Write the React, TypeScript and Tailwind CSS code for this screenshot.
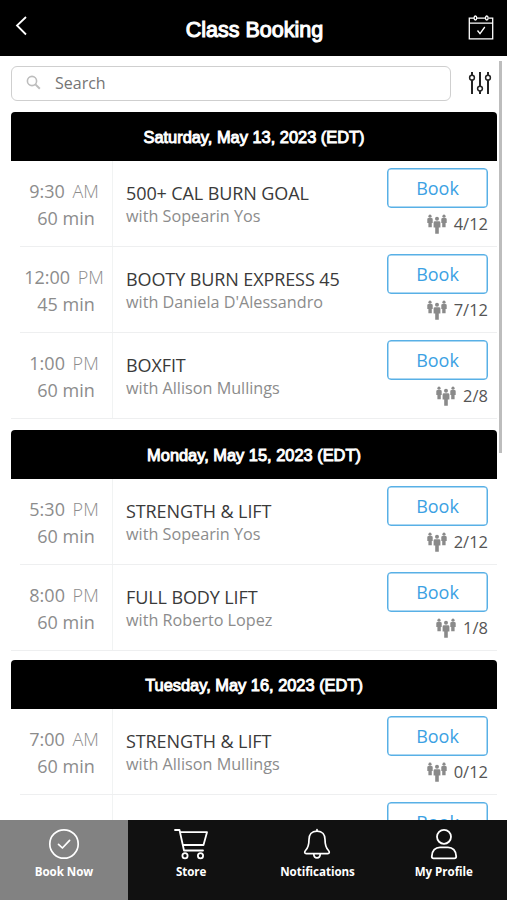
import React from "react";

interface ClassItem {
  time: string;
  period: string;
  duration: string;
  title: string;
  trainer: string;
  spots: string;
}

interface DaySchedule {
  date: string;
  spacing: string;
  classes: ClassItem[];
}

const schedule: DaySchedule[] = [
  {
    date: "Saturday, May 13, 2023 (EDT)",
    spacing: "mb-[11px]",
    classes: [
      { time: "9:30", period: "AM", duration: "60 min", title: "500+ CAL BURN GOAL", trainer: "Sopearin Yos", spots: "4/12" },
      { time: "12:00", period: "PM", duration: "45 min", title: "BOOTY BURN EXPRESS 45", trainer: "Daniela D'Alessandro", spots: "7/12" },
      { time: "1:00", period: "PM", duration: "60 min", title: "BOXFIT", trainer: "Allison Mullings", spots: "2/8" },
    ],
  },
  {
    date: "Monday, May 15, 2023 (EDT)",
    spacing: "mb-[9px]",
    classes: [
      { time: "5:30", period: "PM", duration: "60 min", title: "STRENGTH & LIFT", trainer: "Sopearin Yos", spots: "2/12" },
      { time: "8:00", period: "PM", duration: "60 min", title: "FULL BODY LIFT", trainer: "Roberto Lopez", spots: "1/8" },
    ],
  },
  {
    date: "Tuesday, May 16, 2023 (EDT)",
    spacing: "mb-[10px]",
    classes: [
      { time: "7:00", period: "AM", duration: "60 min", title: "STRENGTH & LIFT", trainer: "Allison Mullings", spots: "0/12" },
      { time: "", period: "", duration: "", title: "", trainer: "", spots: "" },
    ],
  },
];

export default function App() {
  return (
    <div className="relative flex h-[900px] w-[507px] flex-col overflow-hidden bg-white font-['Open_Sans',sans-serif]">
      {/* HEADER */}
      <header className="flex h-14 shrink-0 items-center justify-between bg-black pl-[15px] pr-[13px] text-white">
        <button className="mb-[4px] w-[26px]">
          <BackIcon />
        </button>
        <h1 className="mt-[3px] font-['Liberation_Sans',sans-serif] text-[21.5px] leading-6 [-webkit-text-stroke:1.1px_white]">
          Class Booking
        </h1>
        <button>
          <CalendarIcon />
        </button>
      </header>

      <main className="min-h-0 flex-1 overflow-hidden pl-[11px] pr-[10px] pt-[10px]">
        {/* SEARCH */}
        <div className="flex items-center justify-between pr-[5px]">
          <div className="flex h-[35px] w-[440px] items-center rounded-md border border-[#cfcfcf] pb-[2px] pl-[14px]">
            <SearchIcon />
            <span className="ml-[14px] text-base text-[#757575]">Search</span>
          </div>
          <FilterIcon />
        </div>

        {/* CLASS LIST */}
        <div className="mt-[11px]">
          {schedule.map((day) => (
            <section key={day.date} className={day.spacing}>
              <h2 className="flex h-[49px] items-center justify-center rounded-t-[4px] bg-black pt-[2px] font-['Liberation_Sans',sans-serif] text-[16.4px] text-white [-webkit-text-stroke:0.95px_white]">
                <span className="w-full text-center">{day.date}</span>
              </h2>
              {day.classes.map((item, i) => (
                <ClassRow key={i} item={item} last={i === day.classes.length - 1} />
              ))}
            </section>
          ))}
        </div>
      </main>

      <div className="absolute right-[5px] top-[61px] h-[392px] w-[3px] bg-[#bdbdbd]" />

      {/* BOTTOM TABS */}
      <nav className="flex h-20 shrink-0 bg-[#111111] text-white">
        <Tab label="Book Now" icon={<BookIcon />} active />
        <Tab label="Store" icon={<CartIcon />} />
        <Tab label="Notifications" icon={<BellIcon />} />
        <Tab label="My Profile" icon={<ProfileIcon />} />
      </nav>
    </div>
  );
}

/* HELPER COMPONENTS */

function ClassRow({ item, last }: { item: ClassItem; last: boolean }) {
  return (
    <div className={`flex h-[86px] border-b border-[#eeeff0] ${last ? "" : "ml-[9px]"}`}>
      <div className={`shrink-0 border-r border-[#f1f3f3] pt-[17px] text-center text-[18px] leading-[27px] text-[#8c8c8c] ${last ? "w-[102px] pl-[9px]" : "w-[93px]"}`}>
        <p className="-ml-[4px] whitespace-nowrap">
          {item.time} <span className="ml-[3px] font-light">{item.period}</span>
        </p>
        <p>{item.duration}</p>
      </div>
      <div className="flex-1 pl-[13px] pt-[20px]">
        <p className="whitespace-nowrap text-[18px] leading-[24px] tracking-[-0.1px] text-[#3a3a3a]">{item.title}</p>
        {item.trainer && <p className="whitespace-nowrap text-[16.2px] leading-[22px] text-[#8c8c8c]">with {item.trainer}</p>}
      </div>
      <div className="flex flex-col items-end pr-[9px] pt-[7px]">
        <button className="h-[40px] w-[101px] rounded-[4px] border-[1.5px] border-[#58b0e6] text-[18px] text-[#3ba1e3] shadow-[inset_0_0_0_0.5px_#58b0e6]">
          Book
        </button>
        {item.spots && (
          <div className="mt-[4px] flex items-center gap-[7px]">
            <PeopleIcon />
            <span className="text-[16.5px] leading-[24px] text-[#555555]">{item.spots}</span>
          </div>
        )}
      </div>
    </div>
  );
}

function Tab({ label, icon, active }: { label: string; icon: React.ReactNode; active?: boolean }) {
  return (
    <button
      className={`flex flex-col items-center pt-[8px] ${active ? "w-[128px] bg-[#828282]" : "flex-1"}`}
    >
      {icon}
      <span className="mt-[3px] text-[11.6px] font-bold leading-[18px] tracking-[-0.05px]">{label}</span>
    </button>
  );
}

/* INLINE ICONS */
const BackIcon = () => <svg viewBox="0 0 12 20" fill="none" stroke="currentColor" strokeWidth="1.8" className="h-5 w-3"><path d="M11 1L2 9.5L11 18.5" /></svg>;

const CalendarIcon = () => (
  <svg viewBox="0 0 26 26" fill="none" stroke="currentColor" strokeWidth="1.3" className="h-[26px] w-[26px]">
    <path d="M6 3.2H1.3V23.8H24.7V3.2H20.5M9 3.2H17M1.3 8.2H24.7" />
    <path d="M9.5 15.5L12 18.6L16.8 12" />
    <ellipse cx="7.4" cy="3" rx="1.3" ry="2" />
    <ellipse cx="18.8" cy="3" rx="1.3" ry="2" />
  </svg>
);

const SearchIcon = () => <svg viewBox="0 0 15 15" fill="none" stroke="#bdbdbd" strokeWidth="1.6" className="h-[15px] w-[15px]"><circle cx="6" cy="6" r="4.6" /><path d="M9.4 9.4L13.8 13.8" strokeWidth="2" /></svg>;

const FilterIcon = () => (
  <svg viewBox="0 0 24 24" fill="none" stroke="#242424" strokeWidth="2" className="-mt-[2px] h-6 w-6">
    <path d="M4 1V4.3M4 9V23M12 1V15.3M12 20V23M20 1V4.3M20 9V23" />
    <circle cx="4" cy="6.7" r="2.4" strokeWidth="1.5" />
    <circle cx="12" cy="17.6" r="2.4" strokeWidth="1.5" />
    <circle cx="20" cy="6.7" r="2.4" strokeWidth="1.5" />
  </svg>
);

const PeopleIcon = () => (
  <svg viewBox="0 0 20 20" fill="#8a8a8a" className="h-5 w-5">
    <circle cx="3" cy="2.2" r="1.6" />
    <path d="M1.6 4H4.4Q5.7 4 5.7 5.2V9H4.8V13.3H1.4V9H.3V5.2Q.3 4 1.6 4Z" />
    <circle cx="17" cy="2.2" r="1.6" />
    <path d="M15.6 4H18.4Q19.7 4 19.7 5.2V9H18.6V13.3H15.2V9H14.3V5.2Q14.3 4 15.6 4Z" />
    <circle cx="10" cy="4.7" r="2" />
    <path d="M8 7.2H12Q13.4 7.2 13.4 8.6V13.4H11.8V19.8H8.2V13.4H6.6V8.6Q6.6 7.2 8 7.2Z" />
  </svg>
);

const BookIcon = () => (
  <svg viewBox="0 0 32 32" fill="none" stroke="currentColor" strokeWidth="1.7" strokeLinecap="round" strokeLinejoin="round" className="h-8 w-8">
    <circle cx="16" cy="16" r="14.2" />
    <path d="M10.5 16.3L14.4 20L21.6 12.4" />
  </svg>
);

const CartIcon = () => (
  <svg viewBox="0 0 34 32" fill="none" stroke="currentColor" strokeWidth="1.8" strokeLinecap="round" strokeLinejoin="round" className="h-8 w-[34px]">
    <path d="M1 2H5.5L10 22.5H29M6.3 4.2H33L29.5 17H9" />
    <circle cx="11" cy="27.7" r="2.6" />
    <circle cx="26.5" cy="27.7" r="2.6" />
  </svg>
);

const BellIcon = () => (
  <svg viewBox="0 0 32 32" fill="none" stroke="currentColor" strokeWidth="1.7" strokeLinecap="round" strokeLinejoin="round" className="h-8 w-8">
    <path d="M16 1.7V3.2M16 3.2C10.5 3.2 8 7 8 11.5C8 18 6.7 20.3 4.5 22.5C3.2 24 3.5 25.6 5.3 25.6H26.7C28.5 25.6 28.8 24 27.5 22.5C25.3 20.3 24 18 24 11.5C24 7 21.5 3.2 16 3.2Z" />
    <path d="M12.8 26C12.8 31.2 19.2 31.2 19.2 26" />
  </svg>
);

const ProfileIcon = () => (
  <svg viewBox="0 0 32 32" fill="none" stroke="currentColor" strokeWidth="1.8" strokeLinejoin="round" className="h-8 w-8">
    <circle cx="16" cy="8.8" r="7" />
    <path d="M3.8 28.5C3.8 22.5 7.5 19.3 12 19.3H20C24.5 19.3 28.2 22.5 28.2 28.5Q28.2 30.3 26.4 30.3H5.6Q3.8 30.3 3.8 28.5Z" />
  </svg>
);
